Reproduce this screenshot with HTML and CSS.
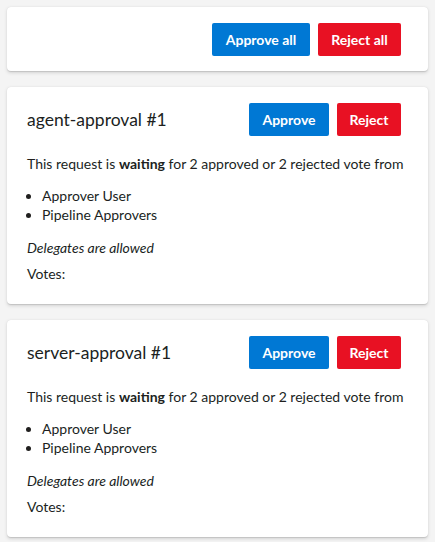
FILE: index.html
```html
<!DOCTYPE html>
<html>
<head>
<meta charset="utf-8">
<link rel="stylesheet" href="styles.css">
</head>
<body>
<div class="page">
  <div class="card top-card">
    <div class="actions">
      <button class="btn btn-approve btn-all">Approve all</button>
      <button class="btn btn-reject btn-all">Reject all</button>
    </div>
  </div>

  <div class="card">
    <div class="header">
      <h2 class="title">agent-approval #1</h2>
      <div class="actions">
        <button class="btn btn-approve">Approve</button>
        <button class="btn btn-reject">Reject</button>
      </div>
    </div>
    <p class="status">This request is <b>waiting</b> for 2 approved or 2 rejected vote from</p>
    <ul class="approvers">
      <li>Approver User</li>
      <li>Pipeline Approvers</li>
    </ul>
    <p class="delegates">Delegates are allowed</p>
    <p class="votes">Votes:</p>
  </div>

  <div class="card">
    <div class="header">
      <h2 class="title">server-approval #1</h2>
      <div class="actions">
        <button class="btn btn-approve">Approve</button>
        <button class="btn btn-reject">Reject</button>
      </div>
    </div>
    <p class="status">This request is <b>waiting</b> for 2 approved or 2 rejected vote from</p>
    <ul class="approvers">
      <li>Approver User</li>
      <li>Pipeline Approvers</li>
    </ul>
    <p class="delegates">Delegates are allowed</p>
    <p class="votes">Votes:</p>
  </div>
</div>
</body>
</html>
```

FILE: styles.css
```css
html, body {
  margin: 0;
  padding: 0;
  background: #f4f4f4;
}
body {
  font-family: Lato, "Noto Sans", sans-serif;
  font-size: 14px;
  color: #201f1e;
}
.page {
  padding: 7px;
  display: flex;
  flex-direction: column;
  gap: 16px;
}
.card {
  background: #ffffff;
  border-radius: 4px;
  box-shadow: 0 1.6px 3.6px rgba(0,0,0,0.13), 0 0.3px 0.9px rgba(0,0,0,0.11);
  padding: 16px 27px 21px 20px;
}
.top-card {
  padding: 16px 27px 15px 20px;
  display: flex;
  justify-content: flex-end;
}
.actions {
  display: flex;
  gap: 8px;
}
.btn {
  border: none;
  border-radius: 2px;
  height: 33px;
  color: #ffffff;
  font-family: inherit;
  font-size: 14px;
  font-weight: 700;
  padding: 0;
  cursor: pointer;
}
.btn-approve {
  background: #0078d4;
  width: 80px;
}
.btn-reject {
  background: #e81123;
  width: 64px;
}
.btn-all.btn-approve { width: 98px; }
.btn-all.btn-reject { width: 83px; }
.header {
  display: flex;
  align-items: center;
  justify-content: space-between;
  height: 33px;
}
.title {
  margin: 0;
  font-size: 17.5px;
  font-weight: 400;
  line-height: 24px;
}
.status {
  margin: 18px 0 0;
  line-height: 19px;
  white-space: nowrap;
}
.approvers {
  margin: 13px 0 0;
  padding-left: 15px;
  line-height: 19px;
}
.delegates {
  margin: 14px 0 0;
  font-style: italic;
  line-height: 19px;
}
.votes {
  margin: 7px 0 0;
  line-height: 19px;
}
```
